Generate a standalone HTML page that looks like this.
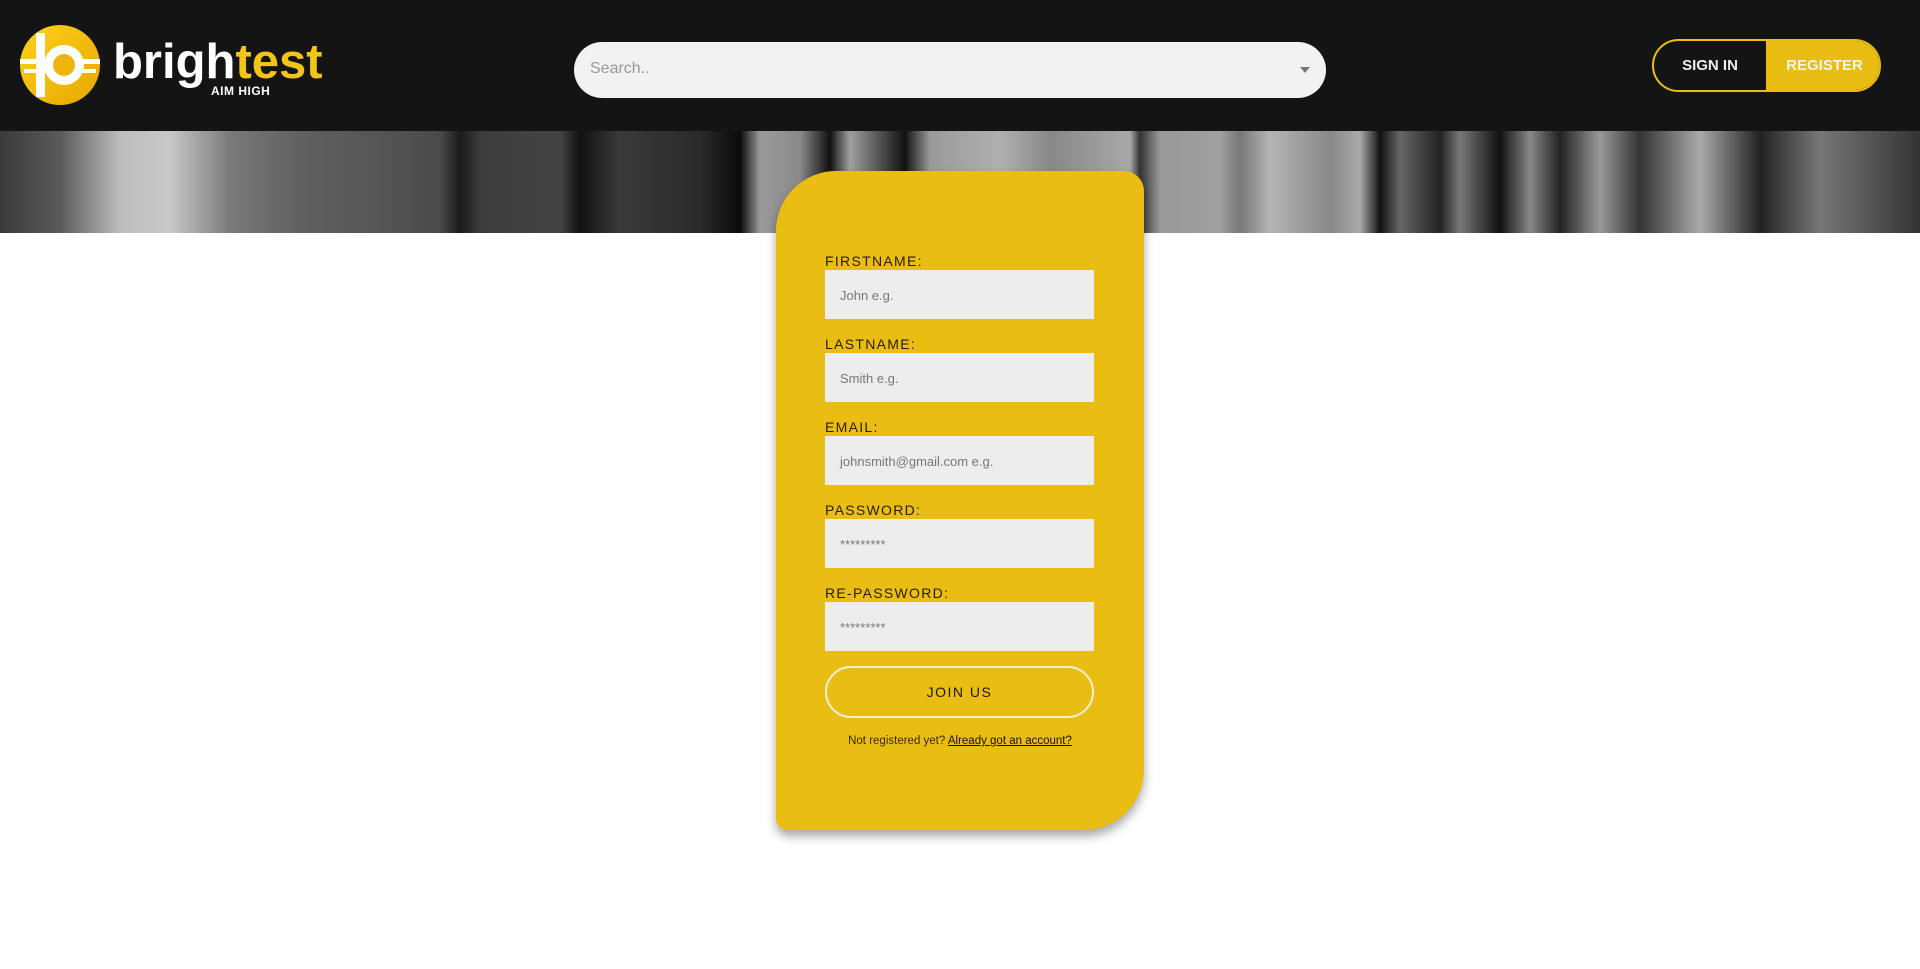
<!DOCTYPE html>
<html><head><meta charset="utf-8"><style>
*{margin:0;padding:0;box-sizing:border-box}
body{width:1920px;height:969px;background:#fff;font-family:"Liberation Sans",sans-serif;position:relative;overflow:hidden}
.hdr{position:absolute;left:0;top:0;width:1920px;height:131px;background:#141414}
.hero{position:absolute;left:0;top:131px;width:1920px;height:102px;
background:linear-gradient(90deg,#3a3a3a 0,#5a5a5a 60px,#bdbdbd 120px,#c8c8c8 170px,#7a7a7a 230px,#606060 300px,#555 380px,#4a4a4a 440px,#1a1a1a 460px,#3c3c3c 480px,#444 560px,#111 580px,#3a3a3a 620px,#2a2a2a 700px,#0a0a0a 740px,#9a9a9a 760px,#8a8a8a 800px,#111 830px,#a0a0a0 850px,#111 905px,#9a9a9a 930px,#b0b0b0 1000px,#888 1050px,#a8a8a8 1130px,#333 1140px,#999 1160px,#a0a0a0 1220px,#777 1240px,#b5b5b5 1270px,#888 1330px,#aaa 1360px,#111 1380px,#666 1400px,#222 1440px,#777 1460px,#111 1500px,#888 1530px,#222 1560px,#999 1600px,#333 1640px,#aaa 1700px,#222 1760px,#777 1820px,#333 1920px)}
.logo{position:absolute;left:20px;top:25px;width:80px;height:80px;border-radius:50%;background:linear-gradient(135deg,#ffd21a,#e6a600)}
.brand{position:absolute;left:113px;top:38px;font-size:49px;line-height:49px;font-weight:bold;color:#fff;font-family:"Liberation Sans",sans-serif}
.brand span{color:#f2c417}
.aim{position:absolute;left:211px;top:84px;font-size:12px;font-weight:bold;color:#fff;letter-spacing:.5px}
.search{position:absolute;left:574px;top:42px;width:752px;height:56px;border-radius:28px;background:#f2f2f2;color:#999;font-size:16px;padding:18px 16px}
.caret{position:absolute;right:16px;top:25px;border:5px solid transparent;border-top:6px solid #777}
.auth{position:absolute;left:1652px;top:39px;width:229px;height:53px;border:2px solid #eabd12;border-radius:27px;overflow:hidden;font-weight:bold;font-size:15px}
.si{position:absolute;left:0;top:0;width:112px;height:49px;color:#eee;text-align:center;line-height:49px}
.rg{position:absolute;left:112px;top:0;width:117px;height:49px;background:#eabd12;color:#f4f4f4;text-align:center;line-height:49px}
.card{position:absolute;left:776px;top:171px;width:368px;height:659px;background:#e9bd12;border-radius:60px 20px 60px 12px;box-shadow:0 6px 10px rgba(0,0,0,.35)}
.lbl{position:absolute;left:49px;font-size:14px;letter-spacing:1.3px;color:#2a1c00}
.inp{position:absolute;left:49px;width:269px;height:49px;background:#ededed;color:#777;font-size:13px;padding:18px 15px}
.btn{position:absolute;left:49px;top:495px;width:269px;height:52px;border:2px solid #f6f0da;border-radius:26px;text-align:center;line-height:48px;font-size:14px;letter-spacing:1.5px;color:#1e1600}
.ft{position:absolute;left:0;width:368px;top:564px;text-align:center;font-size:11.5px;color:#3a2a00}
.ft u{color:#1a1200}
</style></head><body>
<div class="hdr">
<div class="logo">
<svg width="80" height="80" viewBox="0 0 80 80"><g fill="#fff"><rect x="16" y="8" width="9" height="64"/><circle cx="44" cy="40" r="20"/><rect x="0" y="34" width="80" height="5"/><rect x="4" y="44" width="72" height="4"/></g><circle cx="44" cy="40" r="11" fill="#f0b50c"/><rect x="21" y="34" width="8" height="14" fill="#fff"/></svg>
</div>
<div class="brand">brigh<span>test</span></div>
<div class="aim">AIM HIGH</div>
<div class="search">Search..<div class="caret"></div></div>
<div class="auth"><div class="si">SIGN IN</div><div class="rg">REGISTER</div></div>
</div>
<div class="hero"></div>
<div class="card">
<div class="lbl" style="top:82px">FIRSTNAME:</div>
<div class="inp" style="top:99px">John e.g.</div>
<div class="lbl" style="top:165px">LASTNAME:</div>
<div class="inp" style="top:182px">Smith e.g.</div>
<div class="lbl" style="top:248px">EMAIL:</div>
<div class="inp" style="top:265px">johnsmith@gmail.com e.g.</div>
<div class="lbl" style="top:331px">PASSWORD:</div>
<div class="inp" style="top:348px">*********</div>
<div class="lbl" style="top:414px">RE-PASSWORD:</div>
<div class="inp" style="top:431px">*********</div>
<div class="btn">JOIN US</div>
<div class="ft">Not registered yet? <u>Already got an account?</u></div>
</div>
</body></html>
